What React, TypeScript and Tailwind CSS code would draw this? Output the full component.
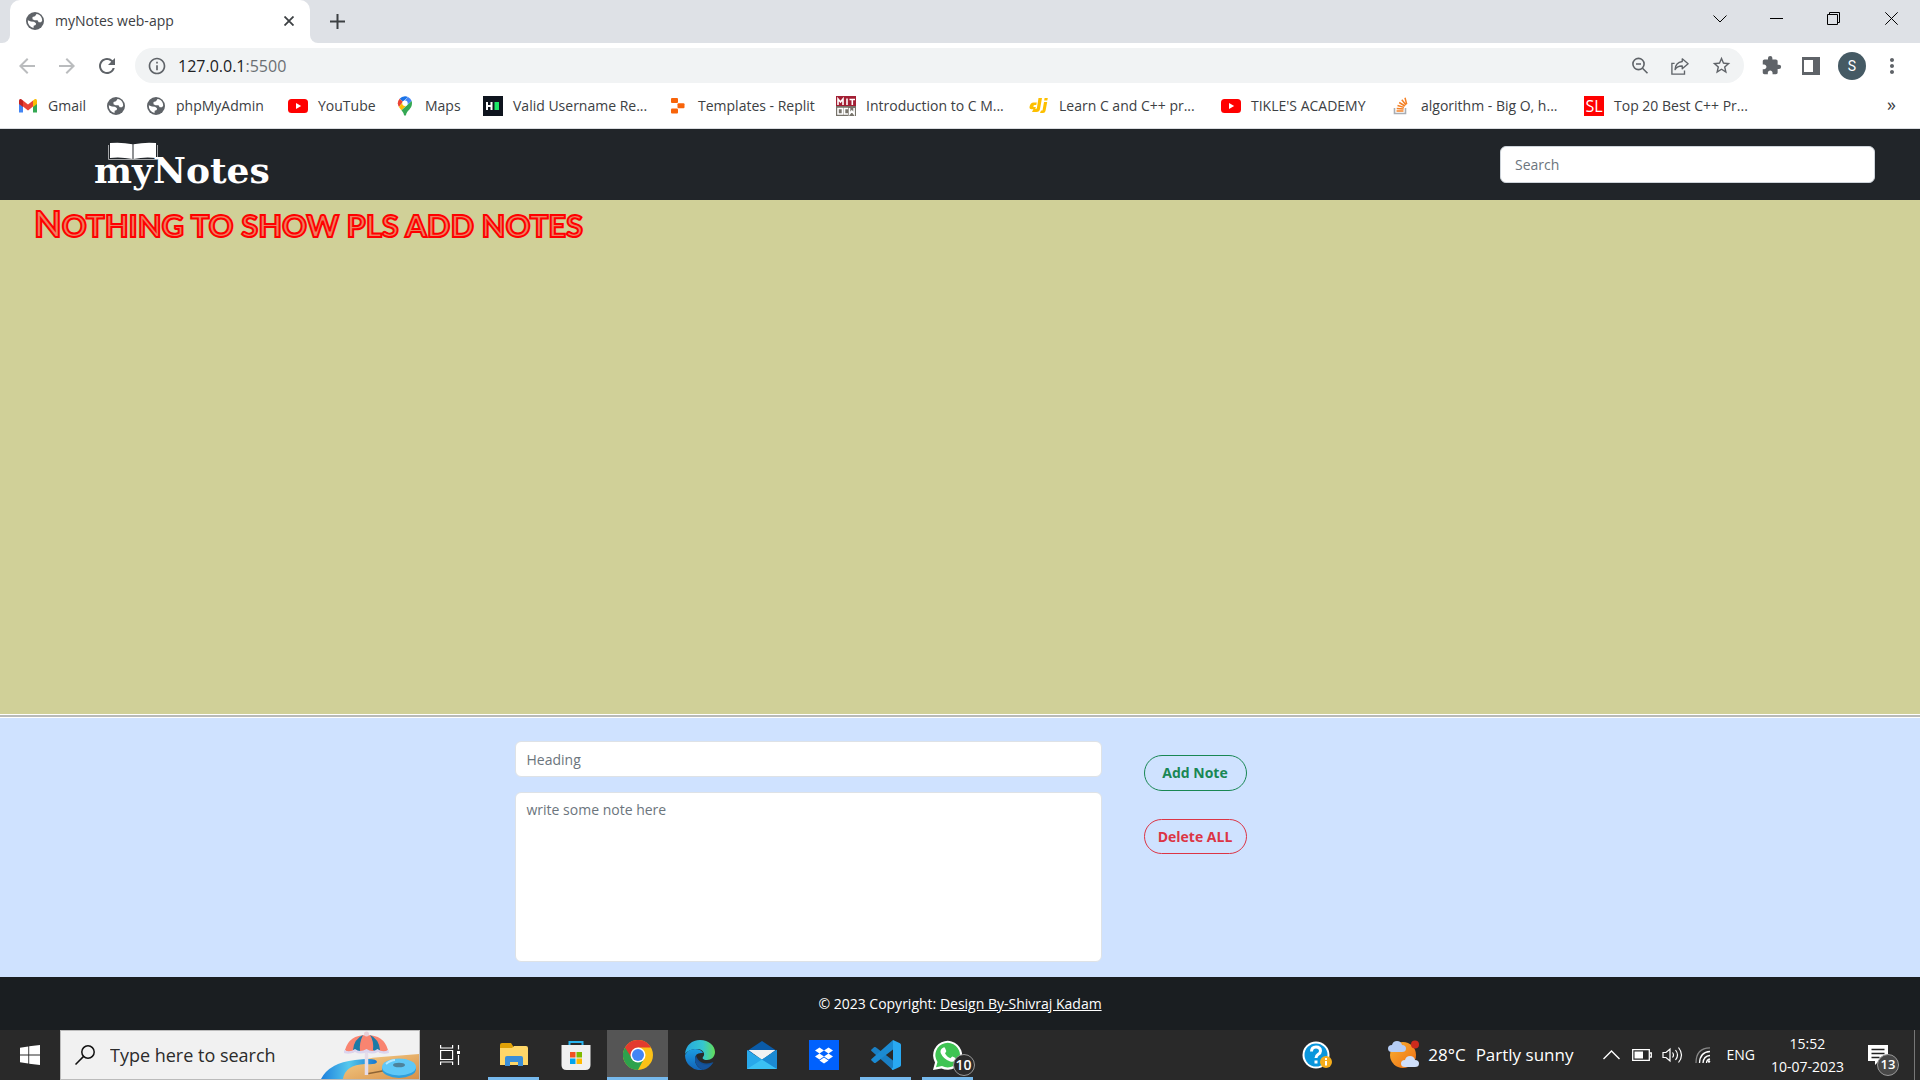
import type { ReactNode } from "react";
import { MdArrowBack, MdArrowForward, MdRefresh, MdInfoOutline, MdStarBorder, MdExtension, MdMoreVert } from "react-icons/md";

function Globe() {
  return (
    <svg viewBox="0 0 18 18" className="size-[18px] shrink-0">
      <circle cx="9" cy="9" r="9" fill="#5f6368" />
      <path d="M10.500 2 9 4.200 6.500 5v2.200l2 1h3l1.200 2H15l1.200-1.500A7.200 7.200 0 0 0 12 2.300z" fill="#fff" />
      <path d="M1.800 8.300 5 9.500l3 .2 2 1.600-.3 1.700-2 .8-.2 2.200A7.200 7.200 0 0 1 1.800 8.300z" fill="#fff" />
    </svg>
  );
}

function GmailIcon() {
  return (
    <svg viewBox="0 0 20 16" className="h-4 w-5 shrink-0">
      <path d="M1 3v11.500h4V6z" fill="#4285f4" />
      <path d="M19 3v11.500h-4V6z" fill="#34a853" />
      <path d="M15 2.500 17 1q2-.5 2 1.800V6l-4 3z" fill="#fbbc04" />
      <path d="M5 2.500 3 1Q1 .5 1 2.800V6l4 3z" fill="#c5221f" />
      <path d="m5 2.500 5 4 5-4V8.500l-5 4-5-4z" fill="#ea4335" />
    </svg>
  );
}

function YouTubeIcon() {
  return (
    <svg viewBox="0 0 20 14" className="h-[14px] w-5 shrink-0">
      <rect width="20" height="14" rx="3.500" fill="#f00" />
      <path d="m8 4 5.200 3L8 10z" fill="#fff" />
    </svg>
  );
}

function MapsIcon() {
  return (
    <svg viewBox="0 0 16 20" className="h-5 w-4 shrink-0">
      <path d="M8 .3a7 7 0 0 0-5.400 2.500L6 5.800 11 .9A7 7 0 0 0 8 .3z" fill="#1a73e8" />
      <path d="M2.600 2.800A7 7 0 0 0 2 11l4-5.200z" fill="#ea4335" />
      <path d="m11 .9-4.700 5.500L10 9l4.700-4A7 7 0 0 0 11 .9z" fill="#4285f4" />
      <path d="M2 11q1.200 1.800 2.500 3.200L10 8.800 6 5.800z" fill="#fbbc04" />
      <path d="M14.700 5 4.500 14.200Q6.500 16.500 7 19q1 1.500 2 0c.7-4.500 6-6 6-11.800q0-1.200-.3-2.200z" fill="#34a853" />
      <circle cx="8" cy="7.200" r="2.700" fill="#fff" />
    </svg>
  );
}

function HackerIcon() {
  return (
    <svg viewBox="0 0 20 20" className="size-5 shrink-0">
      <path fill="#0e141e" d="M0 0h20v20H0z" />
      <path d="M4 6v8M8.500 6v8M4 10h4.500" stroke="#fff" strokeWidth="2" fill="none" />
      <path fill="#1ce868" d="M11.500 6H16v8h-4.500z" />
    </svg>
  );
}

function ReplitIcon() {
  return (
    <svg viewBox="0 0 16 16" className="size-4 shrink-0" fill="#f8640a">
      <rect x="1" y="0" width="7" height="5" rx="1" />
      <rect x="7.500" y="5.300" width="7" height="5" rx="1" />
      <rect x="1" y="10.600" width="7" height="5" rx="1" />
    </svg>
  );
}

function MitIcon() {
  return (
    <svg viewBox="0 0 20 20" className="size-5 shrink-0">
      <path fill="#a31f34" d="M0 0h20v10H0z" />
      <path fill="#77736a" d="M0 10h20v10H0z" />
      <g stroke="#fff" strokeWidth="1.600" fill="none">
        <path d="M2 9V3l2.500 3L7 3v6M11 2.500V9M13.500 3.500H19M16.300 3.500V9" />
        <path d="M6.500 12.500H2v5.500h4.500zM12 12.500H8.500V18H12M13.500 12v6l2.300-3 2.300 3v-6" />
      </g>
    </svg>
  );
}

function DjiIcon() {
  return (
    <svg viewBox="0 0 20 16" className="h-4 w-5 shrink-0" fill="#fdbf00">
      <path d="M9.500 0H13l-2 11q-.5 3-3.500 3H3l1.500-3h2.200q1 0 1.200-1z" />
      <path d="M4.500 4.500h3.300L7.300 7H6q-1.200 0-1.600 1t.6 1h1.800l-.5 2.200H2.500Q0 11 .6 8.500 1.500 4.500 4.500 4.500z" />
      <path d="M15 4h3.200l-1.700 9q-.4 2-2.500 2h-3l1-2.400h1q.5 0 .6-.6zM15.600 0h3.200l-.5 2.500h-3.200z" />
    </svg>
  );
}

function StackIcon() {
  return (
    <svg viewBox="0 0 18 18" className="size-[18px] shrink-0" fill="none">
      <path d="M2.500 11v5.500h11V11" stroke="#a9adb3" strokeWidth="1.600" />
      <path d="M4.500 14h7M4.700 11.400l7 .7M5.500 8.500l6.500 1.900M7.200 5.500l5.700 3.500M9.800 2.800l4.200 5.200M13 .8l1.700 6.400" stroke="#f48024" strokeWidth="1.500" />
    </svg>
  );
}

function SlIcon() {
  return <span className="flex h-5 w-5 shrink-0 items-center justify-center bg-[#f00] text-base leading-5 text-white">SL</span>;
}

const bookmarks: { icon: ReactNode; label?: string; width: string }[] = [
  { icon: <GmailIcon />, label: "Gmail", width: "w-[88px]" },
  { icon: <Globe />, width: "w-10" },
  { icon: <Globe />, label: "phpMyAdmin", width: "w-[142px]" },
  { icon: <YouTubeIcon />, label: "YouTube", width: "w-[107px]" },
  { icon: <MapsIcon />, label: "Maps", width: "w-[88px]" },
  { icon: <HackerIcon />, label: "Valid Username Re...", width: "w-[185px]" },
  { icon: <ReplitIcon />, label: "Templates - Replit", width: "w-[168px]" },
  { icon: <MitIcon />, label: "Introduction to C M...", width: "w-[193px]" },
  { icon: <DjiIcon />, label: "Learn C and C++ pr...", width: "w-[192px]" },
  { icon: <YouTubeIcon />, label: "TIKLE'S ACADEMY", width: "w-[170px]" },
  { icon: <StackIcon />, label: "algorithm - Big O, h...", width: "w-[193px]" },
  { icon: <SlIcon />, label: "Top 20 Best C++ Pr...", width: "w-[190px]" },
];

function TabStrip() {
  return (
    <div className="flex h-[43px] bg-[#dee1e6] pl-[2px]">
      <div className="w-2 bg-white">
        <div className="h-full rounded-br-lg bg-[#dee1e6]" />
      </div>
      <div className="flex w-[300px] items-center rounded-t-[10px] bg-white px-4 pb-px">
        <Globe />
        <span className="ml-[11px] flex-1 text-sm text-[#3c4043]">myNotes web-app</span>
        <button aria-label="Close tab">
          <svg viewBox="0 0 10 10" className="size-[10px]" stroke="#3c4043" strokeWidth="1.800">
            <path d="m.5.500 9 9M9.500.500l-9 9" />
          </svg>
        </button>
      </div>
      <div className="w-2 bg-white">
        <div className="h-full rounded-bl-lg bg-[#dee1e6]" />
      </div>
      <button aria-label="New tab" className="ml-3">
        <svg viewBox="0 0 15 15" className="size-[15px]" stroke="#3c4043" strokeWidth="2">
          <path d="M7.500 0v15M0 7.500h15" />
        </svg>
      </button>
      <div className="ml-auto flex h-[37px] items-center text-black">
        <button aria-label="Search tabs" className="flex w-[57px] justify-center">
          <svg viewBox="0 0 14 8" className="h-2 w-[14px]" fill="none" stroke="currentColor"><path d="m.5.500 6.500 6.500 6.500-6.500" /></svg>
        </button>
        <button aria-label="Minimize" className="flex w-[57px] justify-center">
          <svg viewBox="0 0 13 1" className="h-px w-[13px]"><path d="M0 0h13v1H0z" /></svg>
        </button>
        <button aria-label="Restore" className="flex w-[57px] justify-center">
          <svg viewBox="0 0 13 13" className="size-[13px]" fill="none" stroke="currentColor"><path d="M.5 2.500h10v10H.5zM2.500 2.500v-2h10v10h-2" /></svg>
        </button>
        <button aria-label="Close" className="flex w-[58px] justify-center">
          <svg viewBox="0 0 13 13" className="size-[13px]" fill="none" stroke="currentColor"><path d="m.3.300 12.400 12.400M12.700.3.300 12.700" /></svg>
        </button>
      </div>
    </div>
  );
}

function Toolbar() {
  return (
    <div className="flex h-[45px] items-center bg-white pr-4 pl-[15px] text-[#5f6368]">
      <button aria-label="Back" className="text-[#babcbe]"><MdArrowBack className="size-6" /></button>
      <button aria-label="Forward" className="ml-4 text-[#babcbe]"><MdArrowForward className="size-6" /></button>
      <button aria-label="Reload" className="ml-4"><MdRefresh className="size-6" /></button>
      <div className="ml-4 flex h-[35px] flex-1 items-center rounded-full bg-[#f1f3f4] pr-3 pl-3">
        <MdInfoOutline className="size-5" />
        <a href="#top" className="ml-[11px] flex-1 text-base text-[#202124]">127.0.0.1<span className="text-[#6b6f73]">:5500</span></a>
        <div className="flex items-center gap-[22px]">
          <button aria-label="Zoom">
            <svg viewBox="0 0 18 18" className="size-[18px]" fill="none" stroke="currentColor" strokeWidth="1.600">
              <circle cx="7.500" cy="7" r="5.600" /><path d="m11.500 11.300 5 5M5 7h5" />
            </svg>
          </button>
          <button aria-label="Share">
            <svg viewBox="0 0 20 20" className="size-[18px]" fill="none" stroke="currentColor" strokeWidth="1.500">
              <path d="M4 7H1v12h14v-4" /><path d="M12.500 2 19 7.500 12.500 13v-3Q7 9.800 4.500 14q.5-8 8-9z" strokeLinejoin="round" />
            </svg>
          </button>
          <button aria-label="Bookmark"><MdStarBorder className="size-[21px]" /></button>
        </div>
      </div>
      <div className="ml-[17px] flex items-center">
        <button aria-label="Extensions"><MdExtension className="size-[21px]" /></button>
        <button aria-label="Side panel" className="ml-5">
          <svg viewBox="0 0 18 18" className="size-[18px]"><path fill="currentColor" fillRule="evenodd" d="M0 0h18v18H0zM2 3v12h9V3z" /></svg>
        </button>
        <button aria-label="Profile" className="ml-[18px] flex size-7 items-center justify-center rounded-full bg-[#455a64] font-[Roboto] text-sm text-white">S</button>
        <button aria-label="Menu" className="ml-[14px]"><MdMoreVert className="size-6" /></button>
      </div>
    </div>
  );
}

function BookmarkBar() {
  return (
    <nav aria-label="Bookmarks" className="flex h-[41px] items-center border-b border-[#dadce0] bg-white pb-1 pl-[18px] text-sm text-[#3c4043]">
      {bookmarks.map((b, i) => (
        <button key={i} aria-label={b.label ?? "Bookmark"} className={`flex shrink-0 items-center whitespace-nowrap ${b.width}`}>
          <span className="mr-[10px] flex w-5 justify-center">{b.icon}</span>
          {b.label}
        </button>
      ))}
      <button aria-label="More bookmarks" className="mr-6 ml-auto pb-1 text-lg leading-5">»</button>
    </nav>
  );
}

function NavBar() {
  return (
    <header className="flex h-[71px] items-center justify-between bg-[#212529] pr-[45px] pl-[94px]">
      <a href="#top" className="flex flex-col text-white">
        <svg viewBox="0 0 50 18" className="ml-[14px] h-[18px] w-[50px]">
          <path d="M.5 3v14.500h49V3" fill="none" stroke="#a5a7a9" />
          <path d="M2 1q12-1 22.500 1.200V17Q12 14.500 2 16zM25.500 2.200Q37 0 48 1v15q-11-1.500-22.500 1z" fill="#fff" />
        </svg>
        <span className="-mt-2 font-['DejaVu_Serif'] text-4xl leading-9 font-bold">myNotes</span>
      </a>
      <input type="search" aria-label="Search" placeholder="Search" className="h-[37px] w-[375px] rounded-md border border-[#ced4da] bg-white px-[14px] text-sm text-[#212529] placeholder:text-[#6c757d]" />
    </header>
  );
}

function NoteForm() {
  const field = "w-full rounded-md border border-[#dee2e6] bg-white px-[11px] text-sm text-[#212529] placeholder:text-[#6c757d]";
  const pill = "w-[103px] rounded-full border text-sm font-bold";
  return (
    <form className="flex justify-center bg-[#cfe2ff] pt-[23px] pb-[15px]" onSubmit={(e) => e.preventDefault()}>
      <div className="flex w-[587px] flex-col gap-[15px]">
        <input aria-label="Heading" placeholder="Heading" className={`h-9 ${field}`} />
        <textarea aria-label="Note" placeholder="write some note here" className={`h-[170px] resize-none py-[7px] ${field}`} />
      </div>
      <div className="mr-[23px] ml-[42px] flex w-[239px] flex-col items-start gap-7 pt-[14px]">
        <button className={`h-9 border-[#198754] text-[#198754] ${pill}`}>Add Note</button>
        <button className={`h-[35px] border-[#dc3545] text-[#dc3545] ${pill}`}>Delete ALL</button>
      </div>
    </form>
  );
}

function BeachPicture() {
  return (
    <svg viewBox="0 0 98 48" className="h-12 w-[98px] self-end">
      <defs>
        <linearGradient id="sand" x1="0" x2="1" y2="1"><stop stopColor="#f6d18c" /><stop offset="1" stopColor="#d89048" /></linearGradient>
        <linearGradient id="sea" x1="0" x2="1"><stop stopColor="#1d80dd" /><stop offset=".5" stopColor="#55c8ec" /><stop offset="1" stopColor="#1677d0" /></linearGradient>
      </defs>
      <path d="M20 48Q25 28 60 26L98 23v25z" fill="url(#sand)" />
      <path d="M0 48Q8 32 34 29q22-3 22 2-1 3-12 2-20 1-22 15z" fill="url(#sea)" />
      <path d="m45 43 22-4" stroke="#8e6435" strokeWidth="1.500" />
      <path d="M45.500 5v39" stroke="#e5dce9" strokeWidth="3.500" />
      <path d="M24 19Q28 4 45.500 4 63 4 67 19q-6 5-11 1-5 4-10.500 0-6 4-11 0-5 4-10.500-1z" fill="#f98470" />
      <path d="M32 19Q33 8 42 4q-4 8-3 16-4 1-7-1zM49 4q9 4 10 15-4 3-7 0 1-9-3-15z" fill="#1b7aa6" />
      <path d="M23 19q6 3 11-1 5 4 11.500 0 6 4 11 0 5 4 11 1l.5 3q-6 2-11-1-6 3-11.500 0-6 3-11.500 0-6 3-11 1z" fill="#dcd5ee" />
      <circle cx="45.500" cy="3" r="2.500" fill="#e7cfd7" />
      <ellipse cx="78" cy="38" rx="17" ry="9" fill="#2f9fdc" />
      <ellipse cx="78" cy="36" rx="17" ry="8.500" fill="#5fc8f7" />
      <ellipse cx="78" cy="34" rx="6" ry="2.300" fill="#4d829b" />
      <path d="M65 33q5-4 9-4" stroke="#b6e8ff" strokeWidth="2" fill="none" />
    </svg>
  );
}

function ExplorerIcon() {
  return (
    <svg viewBox="0 0 30 26" className="h-[26px] w-[30px]">
      <path d="M1 3q0-2 2-2h9l2 3v4H1z" fill="#e0a106" />
      <path d="M1 6h12l2-2h12q2 0 2 2v17H1z" fill="#ffd768" />
      <path d="M6 24V16q0-2 2-2h14q2 0 2 2v8h-5v-4h-8v4z" fill="#3b8fd8" />
    </svg>
  );
}

function StoreIcon() {
  return (
    <svg viewBox="0 0 30 30" className="size-[30px]">
      <path d="M8.500 6V2h13v4" fill="none" stroke="#29b4ef" strokeWidth="2" />
      <path d="M.5 5h29v20q0 5-5 5h-19q-5 0-5-5z" fill="#f0f0f0" />
      <path d="M9 12h5.500v5.500H9z" fill="#f25022" /><path d="M15.500 12H21v5.500h-5.500z" fill="#7fba00" />
      <path d="M9 18.500h5.500V24H9z" fill="#00a4ef" /><path d="M15.500 18.500H21V24h-5.500z" fill="#ffb900" />
    </svg>
  );
}

function ChromeIcon() {
  return (
    <svg viewBox="0 0 30 30" className="size-[30px]">
      <circle cx="15" cy="15" r="15" fill="#fbc117" />
      <path d="M2 7.500A15 15 0 0 0 15 30l6.100-11.500L15 15z" fill="#2da24c" />
      <path d="M2 7.500A15 15 0 0 1 28 7.500H15L9 18.500z" fill="#e33b2e" />
      <circle cx="15" cy="15" r="7.500" fill="#fff" />
      <circle cx="15" cy="15" r="6" fill="#4285f4" />
    </svg>
  );
}

function EdgeIcon() {
  return (
    <svg viewBox="0 0 30 30" className="size-[30px]">
      <defs>
        <linearGradient id="edgeTop" x1="0" x2="1"><stop stopColor="#25a7e0" /><stop offset=".6" stopColor="#35c6cf" /><stop offset="1" stopColor="#63dd58" /></linearGradient>
        <linearGradient id="edgeBody" x1="0" y1="0" x2="0" y2="1"><stop stopColor="#1b9de2" /><stop offset="1" stopColor="#1263b8" /></linearGradient>
      </defs>
      <path d="M0 14C1 5 7 0 15 0c9 0 15 6 15 12 0 5-4 8-8 8-4 0-5-2-4-3 3-3 0-8-6-8Q4 9 0 14z" fill="url(#edgeTop)" />
      <path d="M0 15q3-6 10-6 6 0 8 4-8-1-8 6 0 8 8 11-8 1-13-4-5-4-5-11z" fill="url(#edgeBody)" />
      <path d="M11 15q-3 7 3 11 6 4 14-3 1-1-1-.500-9 3-14-3-2-3-2-4.500z" fill="#124f93" />
      <path d="M10 17q-1 9 8 13 6-1 10-7-7 4-13 0-4-2-5-6z" fill="#15549d" />
    </svg>
  );
}

function MailIcon() {
  return (
    <svg viewBox="0 0 30 30" className="size-[30px]">
      <path d="M0 11 15 1l15 10v3H0z" fill="#0a5ba8" />
      <path d="M1.500 10h27L15 20z" fill="#f2f2f2" />
      <path d="m0 10 15 9.500L30 10v19H0z" fill="#28a8ea" />
      <path d="m0 29 15-9.500L30 29z" fill="#3bc0f3" /><path d="m15 19.500 15-9.500v19z" fill="#1b8ad3" />
    </svg>
  );
}

function DropboxIcon() {
  return (
    <svg viewBox="0 0 30 30" className="size-[30px]">
      <path fill="#0061fe" d="M0 0h30v30H0z" />
      <path fill="#fff" d="m10.500 7.500 4.500 3-4.500 3-4.500-3zM19.500 7.500l4.500 3-4.500 3-4.500-3zM10.500 13.500l4.500 3-4.500 3-4.500-3zM19.500 13.500l4.500 3-4.500 3-4.500-3zM15 17.500l4.500 3-4.500 3-4.500-3z" />
    </svg>
  );
}

function CodeIcon() {
  return (
    <svg viewBox="0 0 30 30" className="size-[30px]">
      <path d="M.5 9.500 3 7.200q.8-.6 1.800 0L22 20.500V30L.5 11q-.8-.8 0-1.500z" fill="#1a7fc4" />
      <path d="M.5 20.500 3 22.800q.8.600 1.800 0L22 9.500V0L.5 19q-.8.800 0 1.500z" fill="#1b8bd3" />
      <path d="m22 0 7 3.300q1 .6 1 1.700v20q0 1.100-1 1.700L22 30q-1 0-1.500-1.500l1.500-1z" fill="#29a9f2" />
    </svg>
  );
}

function WhatsAppIcon() {
  return (
    <span className="relative">
      <svg viewBox="0 0 30 30" className="size-[30px]">
        <path d="M0 30 2 22.500A14.500 14.500 0 1 1 8.500 28.500z" fill="#fff" />
        <path d="M3 27.200 4.500 22A12.300 12.300 0 1 1 9 26z" fill="#3fc453" />
        <path d="M10.500 7.500q1-.5 1.500.5l1.300 3q0 .7-1.300 2.200 2 4 5.500 5 1.500-2 2-1.800l3 1.500q.8.600-.3 2.500-2 2-5 1-7-2.500-9.500-8.500-1-3.500 2.800-5.400z" fill="#fff" />
      </svg>
      <span className="absolute top-[14px] left-5 flex size-[22px] items-center justify-center rounded-full border border-[#999] bg-[#2b2b2b] text-sm font-semibold text-white">10</span>
    </span>
  );
}

const apps: { name: string; icon: ReactNode; state: "open" | "active" | "idle" }[] = [
  { name: "File Explorer", icon: <ExplorerIcon />, state: "open" },
  { name: "Microsoft Store", icon: <StoreIcon />, state: "idle" },
  { name: "Google Chrome", icon: <ChromeIcon />, state: "active" },
  { name: "Microsoft Edge", icon: <EdgeIcon />, state: "idle" },
  { name: "Mail", icon: <MailIcon />, state: "idle" },
  { name: "Dropbox", icon: <DropboxIcon />, state: "idle" },
  { name: "Visual Studio Code", icon: <CodeIcon />, state: "open" },
  { name: "WhatsApp", icon: <WhatsAppIcon />, state: "open" },
];

const appStyle = { idle: "", open: "", active: "bg-[#555]" };
const lineStyle = { idle: "w-0", open: "w-[51px]", active: "w-full" };

function Tray() {
  return (
    <div className="ml-auto flex items-center text-white">
      <button aria-label="Help" className="mr-14">
        <svg viewBox="0 0 30 30" className="size-[30px]">
          <circle cx="14" cy="15" r="13.500" fill="#fff" /><circle cx="14" cy="15" r="11.500" fill="#0a96dc" />
          <path d="M9.500 11.500q0-4.500 4.500-4.500t4.500 4q0 2-2.500 3.500-2 1.300-2 3.500M14 20.500v3" stroke="#fff" strokeWidth="3" fill="none" />
          <circle cx="24" cy="22" r="6" fill="#f6ad1b" /><path d="M24 18v2M24 21v4.500" stroke="#fff" strokeWidth="2" />
        </svg>
      </button>
      <button className="mr-[30px] flex items-center text-[17px]">
        <svg viewBox="0 0 32 30" className="mr-2 h-[30px] w-8">
          <defs><linearGradient id="sun" x1="0" x2="1" y2="1"><stop stopColor="#f9b233" /><stop offset="1" stopColor="#ee6c12" /></linearGradient></defs>
          <circle cx="15" cy="15" r="13" fill="url(#sun)" />
          <path d="M4 12q-4 0-4-3.500T4 5q1-4 5-4 4 0 5 4 4 0 4 3.500T14 12z" fill="#b5cdf5" />
          <path d="M17 27q-4 0-4-3.500t4-3.500q1-4 5-4 4 0 5 4 4 0 4 3.500T27 27z" fill="#cfdffa" />
          <circle cx="27" cy="4.500" r="4" fill="#cc2a1d" />
        </svg>
        <span>28°C</span><span className="ml-[10px]">Partly sunny</span>
      </button>
      <button aria-label="Hidden icons" className="mr-3">
        <svg viewBox="0 0 17 10" className="h-[10px] w-[17px]" fill="none" stroke="#fff" strokeWidth="1.400"><path d="m.5 9 8-8 8 8" /></svg>
      </button>
      <svg viewBox="0 0 20 12" className="mr-[10px] h-3 w-5"><path d="M.7.700h16.600v10.600H.7zM18 4h1.300v4H18" fill="none" stroke="#fff" strokeWidth="1.300" /><path d="M2.500 2.500H11v7H2.500z" fill="#fff" /></svg>
      <svg viewBox="0 0 21 18" className="mr-3 h-[18px] w-[21px]" fill="none" stroke="#fff" strokeWidth="1.200">
        <path d="M1 6.500h3L8 3v12l-4-3.500H1zM10.500 6.500q2 2.500 0 5M13.500 4q4 5 0 10M16.500 1.500q6 7.500 0 15" />
      </svg>
      <svg viewBox="0 0 16 16" className="mr-[15px] size-4" fill="none" stroke="#fff" strokeWidth="1.300">
        <path d="M1 16Q1 1 15 .8" stroke="#888" /><path d="M4.500 16Q5 5 15 4.500M8 16q.5-7 7-7.500M11.500 16q0-3.300 3.500-4" /><circle cx="14" cy="14.500" r="1.200" fill="#fff" stroke="none" />
      </svg>
      <span className="text-sm">ENG</span>
      <button className="ml-4 flex flex-col items-center text-sm leading-[23px]"><span>15:52</span><span>10-07-2023</span></button>
      <button aria-label="Notifications" className="relative mr-[26px] ml-6">
        <svg viewBox="0 0 20 20" className="size-5"><path d="M0 0h20v16h-9l-4 4v-4H0z" fill="#fff" /><path d="M3.500 4.500h13M3.500 8.500h13M3.500 12.500h8" stroke="#222" strokeWidth="1.300" /></svg>
        <span className="absolute top-[9px] left-[9px] flex size-[22px] items-center justify-center rounded-full border border-[#999] bg-[#484848] text-[13px] font-semibold">13</span>
      </button>
      <span className="mr-[5px] h-[50px] w-px bg-[#777]" />
    </div>
  );
}

function Taskbar() {
  return (
    <div className="flex h-[50px] bg-[#292929]">
      <button aria-label="Start" className="flex w-[60px] items-center justify-center">
        <svg viewBox="0 0 20 20" className="size-5" fill="#fff"><path d="m0 2.700 8.300-1.200v8H0zM9.200 1.300 20 0v9.500H9.200zM0 10.500h8.300v8L0 17.300zM9.200 10.500H20V20L9.200 18.700z" /></svg>
      </button>
      <label className="flex w-[360px] items-center border border-[#bbb] bg-[#f1f1f1] pl-[14px]">
        <svg viewBox="0 0 20 20" className="size-5 shrink-0" fill="none" stroke="#111" strokeWidth="1.500"><circle cx="13" cy="7" r="6.200" /><path d="M8.600 11.400.5 19.500" /></svg>
        <input aria-label="Windows search" placeholder="Type here to search" className="ml-[15px] w-0 flex-1 bg-transparent text-lg placeholder:text-[#2b2b2b]" />
        <BeachPicture />
      </label>
      <button aria-label="Task view" className="mr-[3px] flex w-[60px] items-center justify-center">
        <svg viewBox="0 0 20 20" className="size-5" fill="none" stroke="#fff" strokeWidth="1.200"><path d="M.6 0v3h12V0M.6 20v-3h12v3M.6 5.500h12v9H.6zM18.500 0v4.500M18.500 10v10" /><path d="M17 6h3v3h-3z" fill="#fff" stroke="none" /></svg>
      </button>
      <div className="flex gap-px">
        {apps.map((a) => (
          <button key={a.name} aria-label={a.name} className={`flex w-[61px] flex-col items-center ${appStyle[a.state]}`}>
            <span className="flex h-[47px] items-center pt-[3px]">{a.icon}</span>
            <span className={`h-[3px] bg-[#76b9ed] ${lineStyle[a.state]}`} />
          </button>
        ))}
      </div>
      <Tray />
    </div>
  );
}

export default function App() {
  return (
    <div id="top" className="flex min-h-screen flex-col font-['Open_Sans','Noto_Sans',sans-serif]">
      <TabStrip />
      <Toolbar />
      <BookmarkBar />
      <NavBar />
      <main className="flex-1 bg-[#d0d098] px-[34px] pt-[3px]">
        <h1 className="font-[Lato] text-[31px] leading-10 font-bold text-[#ee8060] uppercase [-webkit-text-stroke:2px_#ff0000] first-letter:text-4xl">Nothing to show pls add notes</h1>
      </main>
      <hr className="h-1 border-y border-white bg-[#b9bbb9]" />
      <NoteForm />
      <footer className="flex h-[53px] items-center justify-center bg-[#1a1e21] text-sm text-white">
        <p>© 2023 Copyright: <a href="#top" className="underline">Design By-Shivraj Kadam</a></p>
      </footer>
      <Taskbar />
    </div>
  );
}
